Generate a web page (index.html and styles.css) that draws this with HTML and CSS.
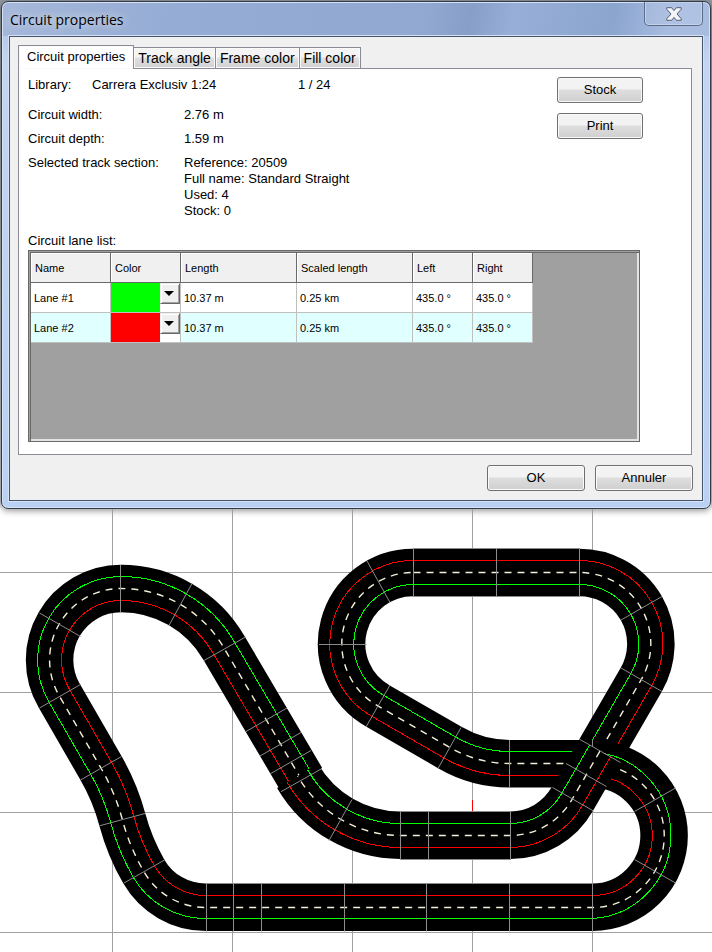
FILE: index.html
```html
<!DOCTYPE html>
<html lang="en">
<head>
<meta charset="utf-8">
<title>Circuit properties</title>
<link rel="stylesheet" href="styles.css">
</head>
<body>
<main class="workspace">
  <section class="dialog" role="dialog" aria-labelledby="dialog-title">
    <header class="titlebar">
      <h1 id="dialog-title" class="title">Circuit properties</h1>
      <button class="close" type="button" aria-label="Close">
        <svg width="16" height="14" viewBox="0 0 16 14" aria-hidden="true">
          <path d="M.8 .7H5.600L8 3.600 10.400 .7H15.200V2.300L11 7 15.200 11.700V13.300H10.400L8 10.400 5.600 13.300H.8V11.700L5 7 .8 2.300Z" fill="#f4f5f8" stroke="#555e70"/>
        </svg>
      </button>
    </header>
    <div class="client">
      <nav class="tabs" role="tablist">
        <button class="tab tab-active" role="tab" aria-selected="true" type="button">Circuit properties</button>
        <button class="tab" role="tab" type="button">Track angle</button>
        <button class="tab" role="tab" type="button">Frame color</button>
        <button class="tab" role="tab" type="button">Fill color</button>
      </nav>
      <div class="page" role="tabpanel">
        <div class="summary">
          <div class="facts">
            <div class="library"><span>Library:</span><span>Carrera Exclusiv 1:24</span><span>1 / 24</span></div>
            <dl class="props">
              <dt>Circuit width:</dt><dd>2.76 m</dd>
              <dt>Circuit depth:</dt><dd>1.59 m</dd>
              <dt>Selected track section:</dt>
              <dd>Reference: 20509<br>Full name: Standard Straight<br>Used: 4<br>Stock: 0</dd>
            </dl>
          </div>
          <div class="side">
            <button class="btn" type="button">Stock</button>
            <button class="btn" type="button">Print</button>
          </div>
        </div>
        <p class="caption" id="lanes">Circuit lane list:</p>
        <div class="list">
          <table class="lanes" aria-labelledby="lanes">
            <colgroup><col class="c-name"><col class="c-color"><col class="c-length"><col class="c-length"><col class="c-angle"><col class="c-angle"></colgroup>
            <thead><tr><th>Name</th><th>Color</th><th>Length</th><th>Scaled length</th><th>Left</th><th>Right</th></tr></thead>
            <tbody>
              <tr><td>Lane #1</td><td class="color"><div class="picker"><span class="swatch green"></span><button class="drop" type="button" aria-label="Lane 1 color"></button></div></td><td>10.37 m</td><td>0.25 km</td><td>435.0 °</td><td>435.0 °</td></tr>
              <tr class="alt"><td>Lane #2</td><td class="color"><div class="picker"><span class="swatch red"></span><button class="drop" type="button" aria-label="Lane 2 color"></button></div></td><td>10.37 m</td><td>0.25 km</td><td>435.0 °</td><td>435.0 °</td></tr>
            </tbody>
          </table>
        </div>
      </div>
      <footer class="actions">
        <button class="btn" type="button">OK</button>
        <button class="btn" type="button">Annuler</button>
      </footer>
    </div>
  </section>
  <svg class="circuit" viewBox="0 509 712 443" role="img" aria-label="Circuit layout">
    <path class="grid" d="M112.500 508V952M232.500 508V952M352.500 508V952M472.500 508V952M592.500 508V952M0 572.500H712M0 692.500H712M0 812.500H712M0 932.500H712"/>

    <!-- Right loop and the diagonal running into the crossing -->
    <path class="road" d="M413.500 572.400H579.500A71.400 71.400 0 0 1 641.300 679.500L599.900 751.200"/>
    <path class="red" d="M413.500 560.500H579.500A83.400 83.400 0 0 1 651.700 685.500L610.300 757.200"/>
    <path class="green" d="M413.500 584.500H579.500A59.400 59.400 0 0 1 630.900 673.500L589.500 745.200"/>
    <path class="dash" d="M413.500 572.500H579.500A71.400 71.400 0 0 1 641.300 679.500L599.900 751.200"/>

    <!-- Left loop, bottom straight, right hairpin, lower diagonal and back to the top -->
    <path class="road" d="M301.600 779.800L224 648A118.900 118.900 0 0 0 121 588.500A71.400 71.400 0 0 0 59.200 695.700L100.600 767.400A215 215 0 0 1 122.300 819.500A215 215 0 0 0 143.800 871.500A71.400 71.400 0 0 0 205.600 907.200H592.500A71.400 71.400 0 0 0 592.500 764.000L590 763.700H509.500A118.900 118.900 0 0 1 450 747.600L378.300 706.200A71.400 71.400 0 0 1 413.500 572.400"/>
    <path class="green" d="M312 773.800L234.400 642A130.900 130.900 0 0 0 121 576.500A83.400 83.400 0 0 0 48.800 701.700L90.200 773.400A203 203 0 0 1 110.700 822.600A227 227 0 0 0 133.400 877.500A83.400 83.400 0 0 0 205.600 918.500H592.500A83.400 83.400 0 0 0 592.500 752V751.500H509.500A106.900 106.900 0 0 1 456 737.200L384.300 695.800A59.400 59.400 0 0 1 413.500 584.500"/>
    <path class="red" d="M291.200 785.800L213.600 654A106.900 106.900 0 0 0 121 600.500A59.400 59.400 0 0 0 69.600 689.700L111 761.400A227 227 0 0 1 133.900 816.400A203 203 0 0 0 154.200 865.500A59.400 59.400 0 0 0 205.600 895.500H592.500A59.400 59.400 0 0 0 592.500 776V775.500H509.500A130.900 130.900 0 0 1 444 758L372.300 716.600A83.400 83.400 0 0 1 413.500 560.500"/>
    <path class="dash" d="M301.600 779.800L224 648A118.900 118.900 0 0 0 121 588.500A71.400 71.400 0 0 0 59.200 695.700L100.600 767.400A215 215 0 0 1 122.300 819.500A215 215 0 0 0 143.800 871.500A71.400 71.400 0 0 0 205.600 907.500H592.500A71.400 71.400 0 0 0 592.500 764V763.500H509.500A118.900 118.900 0 0 1 450 747.600L378.300 706.200A71.400 71.400 0 0 1 413.500 572.500"/>
    <path class="joint" d="M592.500 740V764"/>

    <!-- Crossing and the inner straight -->
    <path class="road" d="M599.900 751.200L572.300 799A71.400 71.400 0 0 1 510.500 835.200H400.100A118.900 118.900 0 0 1 297.600 776"/>
    <path class="green" d="M589.500 745.200L561.900 793A59.400 59.400 0 0 1 510.500 823.500H400.100A106.900 106.900 0 0 1 307.600 770"/>
    <path class="red" d="M610.300 757.200L582.700 805A83.400 83.400 0 0 1 510.500 847.500H400.100A130.900 130.900 0 0 1 287 782"/>
    <path class="dash" d="M599.900 751.200L572.300 799A71.400 71.400 0 0 1 510.500 835.500H400.100A118.900 118.900 0 0 1 297.600 776"/>

    <!-- Section joints -->
    <path class="joint" d="M413.500 548V597M496.500 548V597M579.500 548V597M413 548.500H580M413 596.500H580M662 596.500L621 620M662 691.500L621 668M367 561L390 602.500M319 644.500H366.500M390 685L366 727M461 727.500L438 768.500M509.500 740V787.500
      M580 739.500L620.500 762.500M566 763.500L606.500 786.500M552.500 787.500L593.500 811M510.500 811V859.500M428.500 811V859.500M400.500 811V859.500M400 811.500H511M400 859.500H511M352 799.500L329 840.500M322 768.500L281 791.700M311 750.500L270 774M301 732.500L260 756M287 708L246 731.500
      M245.500 637L204 660.500M192 583.500L169 625.500M120.500 565V612.500M39.500 613L80.500 636.500M39.500 708L80.500 684.500M121.500 756.500L80.500 780M145 813.500L99.500 825.800M164.500 860L124 883M206.500 883.500V931.500M233.500 883.500V931.500M261.500 883.500V931.500M344.500 883.500V931.500M426.500 883.500V931.500M509.500 883.500V931.500M592.500 883.500V931.500M206 883.500H593M675.500 883L634.500 859.500M675.500 788L634.500 811.500"/>
    <path class="start" d="M472.500 800V811"/>
  </svg>
</main>
</body>
</html>
```

FILE: styles.css
```css
* { box-sizing: border-box; }

body {
  margin: 0;
  background: #fff;
  color: #000;
  font: 13px/16px "Liberation Sans", Arial, sans-serif;
}

button { font: inherit; color: inherit; }

.workspace {
  padding-top: 1px;
  background: linear-gradient(#8f969c, #c4c8cc 500px, #fff 509px);
}

.dialog {
  margin: 0 1px;
  padding: 0 7px 7px;
  border: 1px solid #343c49;
  border-radius: 7px;
  background: linear-gradient(100deg, #a5b8da 0, #95acd4 24%, #91a8d0 60%, #879fc8 66%, #97aed8 72%, #8ba5cf 86%, #a8bce0 94%) 0 0 / 100% 34px no-repeat, linear-gradient(#a8bce0, #c2d5f2 60px, #b9d1f3);
  box-shadow: inset 0 0 0 1px #d5e2f5, 0 2px 6px #0006;
}

.titlebar {
  display: flex;
  justify-content: space-between;
  height: 34px;
}

.title {
  margin: 8px 0 0 1px;
  font: 14px/20px "Open Sans", sans-serif;
  text-shadow: 0 0 8px #fff9, 0 0 12px #fff9;
}

.close {
  display: flex;
  justify-content: center;
  width: 59px;
  height: 24px;
  padding: 5px 0 0;
  border: 1px solid #5b6c88;
  border-top: 0;
  border-radius: 0 0 5px 5px;
  background: #ffffff18;
  box-shadow: inset 0 0 0 1px #c4d3ec;
}

.client {
  padding: 8px 9px 9px 8px;
  border: 1px solid #45536b;
  background: #f0f0f0;
  box-shadow: 0 0 0 1px #d5e2f5;
}

.tabs { display: flex; align-items: flex-end; }

.tab {
  height: 21px;
  margin-left: -1px;
  padding: 0 4px;
  border: 1px solid #898c95;
  border-bottom: 0;
  background: linear-gradient(#f4f4f4 0 45%, #dfdfdf 50%, #d2d2d2);
  box-shadow: inset 0 0 0 1px #fafafa;
  font-size: 14px;
}

.tab-active {
  position: relative;
  height: 24px;
  margin: 0 0 -1px;
  padding: 0 8px 2px;
  background: #fff;
  font-size: 13px;
}

.page {
  margin-right: 1px;
  padding: 8px 51px 12px 9px;
  border: 1px solid #898c95;
  background: #fff;
}

.summary { display: flex; justify-content: space-between; }

.library {
  display: grid;
  grid-template-columns: 64px 206px auto;
  margin-bottom: 14px;
}

.props {
  display: grid;
  grid-template-columns: 156px auto;
  row-gap: 8px;
  margin: 0;
}

.props dd { margin: 0; }

.side {
  display: grid;
  gap: 10px;
  align-content: start;
  width: 86px;
  margin-right: -3px;
}

.btn {
  height: 26px;
  border: 1px solid #707070;
  border-radius: 3px;
  background: linear-gradient(#f3f3f3 0 45%, #dedede 50%, #cfcfcf);
  box-shadow: inset 0 0 0 1px #fafafa;
}

.caption { margin: 14px 0 1px; }

.list {
  height: 192px;
  padding: 2px;
  border: 1px solid #696969;
  background: #a0a0a0;
  box-shadow: inset 1px 1px 0 #a0a0a0, inset 2px 2px 0 #696969, inset -2px -2px 0 #e3e3e3;
}

.lanes {
  border-collapse: separate;
  border-spacing: 0;
  table-layout: fixed;
  width: 502px;
  font-size: 11px;
  line-height: 12px;
}

.c-name { width: 80px; }
.c-color { width: 70px; }
.c-length { width: 116px; }
.c-angle { width: 60px; }

.lanes th, .lanes td {
  height: 30px;
  padding: 1px 3px 0;
  border: solid #c0c0c0;
  border-width: 0 1px 1px 0;
  background: #fff;
  text-align: left;
  font-weight: 400;
}

.lanes th {
  padding: 1px 4px 0;
  border-color: #696969;
  background: #f0f0f0;
  box-shadow: inset 1px 1px 0 #fff;
}
.lanes .alt td { background: #e0ffff; }
.lanes td.color, .lanes .alt td.color { padding: 0; background: #fff; }

.picker { display: flex; height: 29px; }
.swatch { flex: 1; }
.swatch.green { background: #0f0; }
.swatch.red { background: #f00; }

.drop {
  display: grid;
  place-items: center;
  width: 20px;
  height: 21px;
  padding: 0 2px 0 0;
  border: 1px solid;
  border-color: #f0f0f0 #696969 #696969 #f0f0f0;
  background: #f0f0f0;
  box-shadow: inset 1px 1px 0 #fff, inset -1px -1px 0 #a0a0a0;
}

.drop::before {
  content: "";
  border: 5px solid transparent;
  border-top-color: #000;
  border-bottom: 0;
}

.actions {
  display: grid;
  grid-template-columns: 98px 98px;
  justify-content: end;
  gap: 10px;
  margin-top: 10px;
}

.circuit { display: block; width: 100%; }
.circuit path { fill: none; stroke-width: 1; }
.circuit .grid { stroke: #a0a0a0; shape-rendering: crispEdges; }
.circuit .road { stroke: #000; stroke-width: 47.5; }
.circuit .red { stroke: #f00; shape-rendering: crispEdges; }
.circuit .green { stroke: #0f0; shape-rendering: crispEdges; }
.circuit .dash { stroke: #f4f0d8; stroke-dasharray: 7 6; stroke-width: 1.4; }
.circuit .joint { stroke: #8c8c8c; }
.circuit .start { stroke: #f00; shape-rendering: crispEdges; }
```
